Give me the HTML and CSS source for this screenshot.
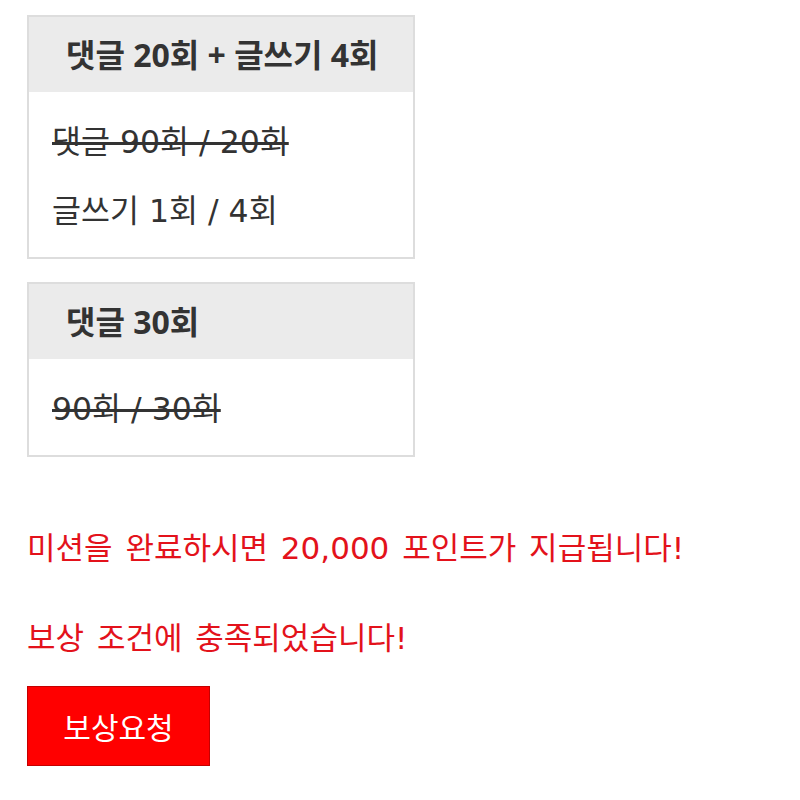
FILE: index.html
```html
<!DOCTYPE html>
<html lang="ko">
<head>
    <meta charset="UTF-8">
    <meta name="viewport" content="width=device-width, initial-scale=1.0">
    <title>미션 보상</title>
    <link rel="stylesheet" href="styles.css">
</head>
<body>
    <div class="mission">
        <div class="mission-title">댓글 20회 + 글쓰기 4회</div>
        <div class="mission-body">
            <p class="done">댓글 90회 / 20회</p>
            <p>글쓰기 1회 / 4회</p>
        </div>
    </div>

    <div class="mission">
        <div class="mission-title">댓글 30회</div>
        <div class="mission-body">
            <p class="done">90회 / 30회</p>
        </div>
    </div>

    <p class="notice first">미션을 완료하시면 20,000 포인트가 지급됩니다!</p>
    <p class="notice">보상 조건에 충족되었습니다!</p>

    <button type="button" class="btn">보상요청</button>
</body>
</html>
```

FILE: styles.css
```css
* {
    box-sizing: border-box;
    margin: 0;
    padding: 0;
}

body {
    padding: 15px 27px;
    font-family: "DejaVu Sans", "Noto Sans CJK KR", sans-serif;
    font-size: 31.5px;
    color: #333;
    background: #fff;
}

.mission {
    width: 388px;
    border: 2px solid #ddd;
    margin-bottom: 23px;
}

.mission-title {
    background: #ebebeb;
    padding: 0 37px;
    height: 75px;
    line-height: 75px;
    font-family: "Open Sans", "Noto Sans CJK KR", sans-serif;
    font-size: 32px;
    font-weight: bold;
    white-space: nowrap;
}

.mission-body {
    padding: 16px 23px 11px;
}

.mission-body p {
    line-height: 69px;
}

.done {
    text-decoration: line-through;
}

.notice {
    color: #e3121b;
    font-size: 31px;
    line-height: 40px;
    word-spacing: 3px;
    margin-top: 50px;
}

.notice.first {
    margin-top: 71px;
}

.btn {
    display: block;
    margin-top: 28px;
    width: 183px;
    height: 80px;
    background: #ff0000;
    border: 1px solid #c40000;
    color: #fff;
    font-family: "Open Sans", "Noto Sans CJK KR", sans-serif;
    font-size: 30px;
    cursor: pointer;
}
```
